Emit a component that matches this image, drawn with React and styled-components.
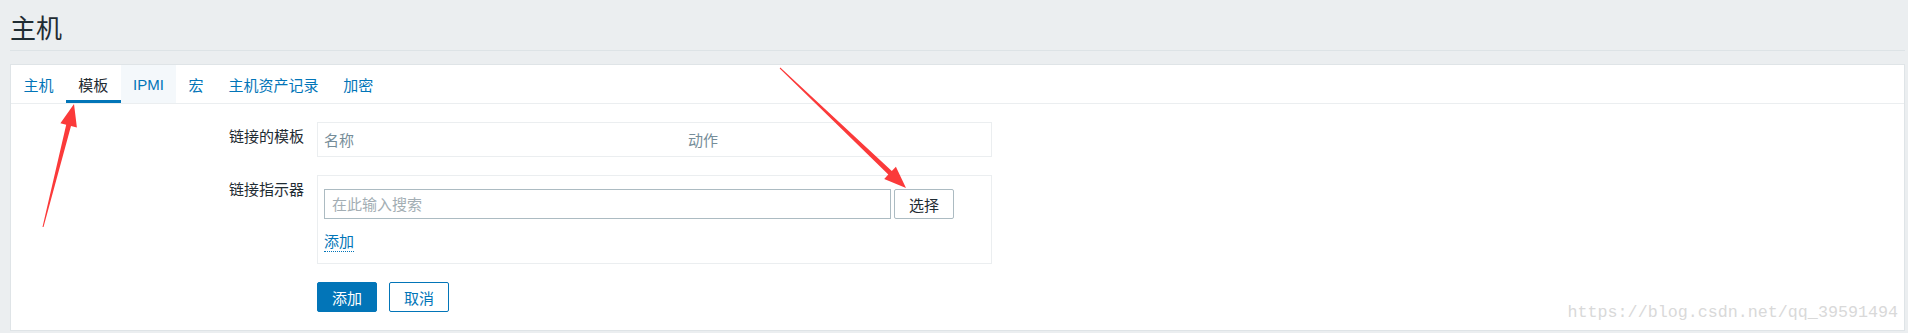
import React from 'react';
import styled, { createGlobalStyle } from 'styled-components';

const GlobalStyle = createGlobalStyle`
  html, body {
    margin: 0;
    padding: 0;
    background: #ebeef0;
  }
  body {
    font-family: "Liberation Sans", Arial, "Noto Sans CJK SC", sans-serif;
    color: #1f2c33;
    font-size: 15px;
  }
`;

const Page = styled.div`
  position: relative;
  width: 1908px;
  height: 333px;
  overflow: hidden;
`;

const Header = styled.div`
  height: 51px;
  margin: 0 3px 0 10px;
  border-bottom: 1px solid #dde3e6;
  display: flex;
  align-items: center;
  padding-top: 3px;
  box-sizing: border-box;
  h1 {
    margin: 0;
    font-size: 26px;
    font-weight: normal;
    color: #1f2c33;
  }
`;

const Panel = styled.div`
  position: relative;
  margin: 13px 3px 0 10px;
  background: #fff;
  border: 1px solid #dfe4e7;
`;

const Tabs = styled.div`
  display: flex;
  height: 38px;
  border-bottom: 1px solid #ebeef0;
`;

const Tab = styled.div`
  display: flex;
  align-items: center;
  padding: 0 12.4px;
  height: 38px;
  box-sizing: border-box;
  color: ${p => (p.$active ? '#1f2c33' : '#0275b8')};
  background: ${p => (p.$hover ? '#f4f8fb' : 'transparent')};
  box-shadow: ${p => (p.$active ? 'inset 0 -3px 0 #0275b8' : 'none')};
`;

const Form = styled.div`
  display: grid;
  grid-template-columns: 293px 1fr;
  column-gap: 13px;
  row-gap: 18px;
  padding: 18px 0;
`;

const Label = styled.div`
  text-align: right;
  padding-top: 6px;
  line-height: 18px;
`;

const Box = styled.div`
  width: 675px;
  box-sizing: border-box;
  border: 1px solid #ebeef0;
`;

const HeadRow = styled.div`
  display: grid;
  grid-template-columns: 364px 1fr;
  height: 33px;
  align-items: center;
  color: #768d99;
  span {
    padding: 0 6px;
  }
`;

const IndicatorBox = styled(Box)`
  padding: 13px 6px 11px;
`;

const SearchRow = styled.div`
  display: flex;
  gap: 3px;
`;

const Input = styled.input`
  width: 567px;
  height: 30px;
  box-sizing: border-box;
  border: 1px solid #acbbc2;
  padding: 0 7px;
  font: inherit;
  color: #1f2c33;
  outline: none;
  &::placeholder {
    color: #a3aeb4;
  }
`;

const Button = styled.button`
  width: 60px;
  height: 30px;
  box-sizing: border-box;
  font: inherit;
  border-radius: 2px;
  padding: 0;
  cursor: pointer;
  border: 1px solid ${p => (p.$variant === 'plain' ? '#acbbc2' : '#0275b8')};
  background: ${p => (p.$variant === 'primary' ? '#0275b8' : '#fff')};
  color: ${p =>
    p.$variant === 'primary' ? '#fff' : p.$variant === 'alt' ? '#0275b8' : '#1f2c33'};
`;

const AddLink = styled.span`
  display: inline-block;
  margin-top: 14px;
  line-height: 18px;
  color: #0275b8;
  border-bottom: 1px dotted #0275b8;
`;

const Actions = styled.div`
  display: flex;
  gap: 12px;
`;

const Watermark = styled.div`
  position: absolute;
  right: 6px;
  bottom: 8px;
  font-family: "Liberation Mono", "DejaVu Sans Mono", monospace;
  font-size: 16.7px;
  color: #d9d9d9;
`;

const Overlay = styled.svg`
  position: absolute;
  left: 0;
  top: 0;
  pointer-events: none;
`;

// arrow polygon from tail to tip, computed from the two points
const arrowPoints = (x1, y1, x2, y2, tailW = 1, neckW = 5, headLen = 22, headW = 17) => {
  const dx = x2 - x1;
  const dy = y2 - y1;
  const len = Math.hypot(dx, dy);
  const ux = dx / len;
  const uy = dy / len;
  const nx = -uy;
  const ny = ux;
  const bx = x2 - ux * headLen;
  const by = y2 - uy * headLen;
  const pts = [
    [x1 + nx * tailW / 2, y1 + ny * tailW / 2],
    [bx + nx * neckW / 2, by + ny * neckW / 2],
    [bx + nx * headW / 2, by + ny * headW / 2],
    [x2, y2],
    [bx - nx * headW / 2, by - ny * headW / 2],
    [bx - nx * neckW / 2, by - ny * neckW / 2],
    [x1 - nx * tailW / 2, y1 - ny * tailW / 2],
  ];
  return pts.map(p => p.map(v => v.toFixed(1)).join(',')).join(' ');
};

const tabs = ['主机', '模板', 'IPMI', '宏', '主机资产记录', '加密'];

const App = () => {
  return (
    <Page>
      <GlobalStyle />
      <Header>
        <h1>主机</h1>
      </Header>
      <Panel>
        <Tabs>
          {tabs.map(t => (
            <Tab key={t} $active={t === '模板'} $hover={t === 'IPMI'}>
              {t}
            </Tab>
          ))}
        </Tabs>
        <Form>
          <Label>链接的模板</Label>
          <Box>
            <HeadRow>
              <span>名称</span>
              <span>动作</span>
            </HeadRow>
          </Box>

          <Label>链接指示器</Label>
          <IndicatorBox>
            <SearchRow>
              <Input placeholder="在此输入搜索" />
              <Button $variant="plain">选择</Button>
            </SearchRow>
            <AddLink>添加</AddLink>
          </IndicatorBox>

          <div />
          <Actions>
            <Button $variant="primary">添加</Button>
            <Button $variant="alt">取消</Button>
          </Actions>
        </Form>
        <Watermark>https://blog.csdn.net/qq_39591494</Watermark>
      </Panel>
      <Overlay width="1908" height="333">
        <polygon points={arrowPoints(43, 227, 74, 104)} fill="#fb3a3a" />
        <polygon points={arrowPoints(780, 68, 906, 188)} fill="#fb3a3a" />
      </Overlay>
    </Page>
  );
};

export default App;
